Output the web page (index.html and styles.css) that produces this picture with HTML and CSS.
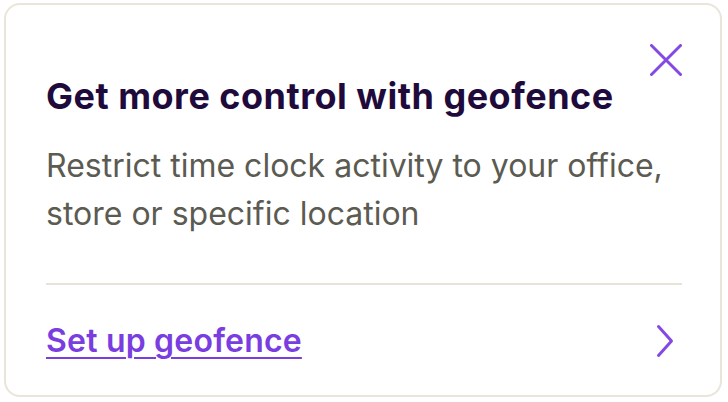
FILE: index.html
```html
<!DOCTYPE html>
<html>
<head>
<meta charset="utf-8">
<meta name="viewport" content="width=device-width, initial-scale=1">
<title>Geofence</title>
<link rel="stylesheet" href="styles.css">
</head>
<body>
<!-- Geofence promo card -->
<div class="card">
	<div class="card-top">
		<button class="close-btn" type="button" aria-label="Close">
			<svg width="32" height="32" viewBox="0 0 32 32" fill="none"><path d="M1.5 1.5 L30.5 30.5 M30.5 1.5 L1.5 30.5" stroke="#8448e3" stroke-width="3" stroke-linecap="round"/></svg>
		</button>
	</div>
	<h2 class="card-title">Get more control with geofence</h2>
	<p class="card-text">Restrict time clock activity to your office, store or specific location</p>
	<div class="card-footer">
		<a class="card-link" href="#">Set up geofence</a>
		<svg class="chevron" width="32" height="34" viewBox="0 0 32 34" fill="none"><path d="M8.5 2.5 L21.5 17 L8.5 31.5" stroke="#8448e3" stroke-width="3" stroke-linecap="round" stroke-linejoin="round"/></svg>
	</div>
</div>
</body>
</html>
```

FILE: styles.css
```css
body {
	margin: 3px 6px 0 4px;
	background: #fff;
	font-family: Inter, "Noto Sans", sans-serif;
}
/* Card */
.card {
	border: 2px solid #e8e5da;
	border-radius: 16px;
	background: #fff;
	padding: 39px 38px 0 40px;
}
.card-top {
	display: flex;
	justify-content: flex-end;
	height: 32px;
}
.close-btn {
	width: 32px;
	height: 32px;
	padding: 0;
	margin: 0;
	border: none;
	background: none;
	cursor: pointer;
}
.close-btn svg {
	display: block;
}
.card-title {
	margin: -2px 0 0;
	font-size: 36px;
	line-height: 44px;
	font-weight: 700;
	letter-spacing: 0.5px;
	color: #1f0b3b;
}
.card-text {
	margin: 24px 0 0;
	font-size: 32px;
	line-height: 48px;
	font-weight: 400;
	color: #5c5b52;
}
/* Footer with link */
.card-footer {
	margin-top: 45px;
	border-top: 2px solid #e6e3d8;
	padding: 36px 0 34px;
	display: flex;
	align-items: center;
	justify-content: space-between;
}
.card-link {
	font-size: 32px;
	line-height: 40px;
	font-weight: 600;
	letter-spacing: 0.2px;
	color: #7a3de0;
	text-decoration: underline;
	text-decoration-thickness: 2px;
	text-underline-offset: 5px;
}
.chevron {
	display: block;
}
```
